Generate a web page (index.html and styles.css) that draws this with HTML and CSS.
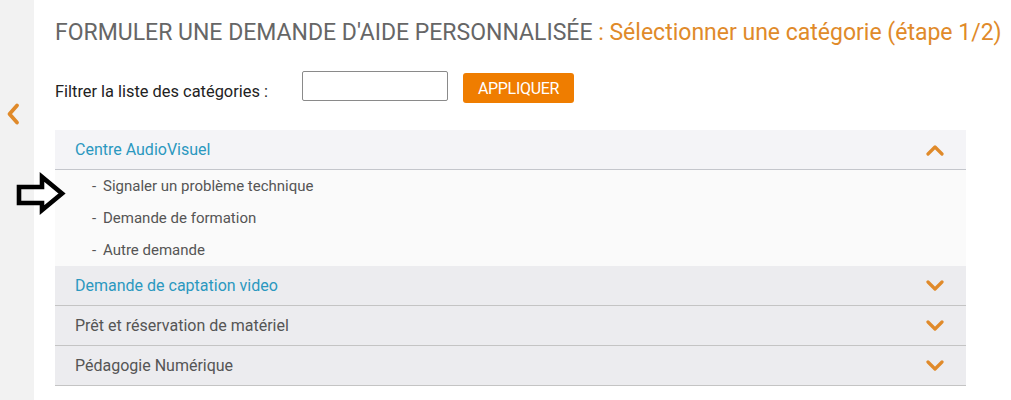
FILE: index.html
```html
<!DOCTYPE html>
<html lang="fr">
<head>
<meta charset="utf-8">
<link rel="stylesheet" href="styles.css">
</head>
<body>
<div class="page">
  <aside class="sidebar">
    <svg class="back" width="16" height="24" viewBox="0 0 16 24"><path d="M12 3.5 L4.5 12 L12 20.5" fill="none" stroke="#e08a2a" stroke-width="3.8" stroke-linecap="round" stroke-linejoin="round"/></svg>
  </aside>
  <main class="main">
    <h1 class="title">FORMULER UNE DEMANDE D'AIDE PERSONNALISÉE <span class="step">: Sélectionner une catégorie (étape 1/2)</span></h1>
    <div class="filter">
      <label class="filter-label">Filtrer la liste des catégories :</label>
      <input class="filter-input" type="text">
      <button class="btn">APPLIQUER</button>
    </div>
    <div class="accordion">
      <div class="acc open">
        <div class="acc-head"><span class="acc-title blue">Centre AudioVisuel</span>
          <svg class="chev" width="20" height="12" viewBox="0 0 20 12"><path d="M3 10 L10 3 L17 10" fill="none" stroke="#e08a2a" stroke-width="3.2" stroke-linecap="round" stroke-linejoin="round"/></svg></div>
        <ul class="acc-body">
          <li><span class="dash">-</span>Signaler un problème technique</li>
          <li><span class="dash">-</span>Demande de formation</li>
          <li><span class="dash">-</span>Autre demande</li>
        </ul>
      </div>
      <div class="acc">
        <div class="acc-head"><span class="acc-title blue">Demande de captation video</span>
          <svg class="chev" width="20" height="12" viewBox="0 0 20 12"><path d="M3 2 L10 9 L17 2" fill="none" stroke="#e08a2a" stroke-width="3.2" stroke-linecap="round" stroke-linejoin="round"/></svg></div>
      </div>
      <div class="acc">
        <div class="acc-head"><span class="acc-title">Prêt et réservation de matériel</span>
          <svg class="chev" width="20" height="12" viewBox="0 0 20 12"><path d="M3 2 L10 9 L17 2" fill="none" stroke="#e08a2a" stroke-width="3.2" stroke-linecap="round" stroke-linejoin="round"/></svg></div>
      </div>
      <div class="acc">
        <div class="acc-head"><span class="acc-title">Pédagogie Numérique</span>
          <svg class="chev" width="20" height="12" viewBox="0 0 20 12"><path d="M3 2 L10 9 L17 2" fill="none" stroke="#e08a2a" stroke-width="3.2" stroke-linecap="round" stroke-linejoin="round"/></svg></div>
      </div>
    </div>
  </main>
  <svg class="pointer" width="54" height="48" viewBox="0 0 54 48"><path d="M4 17 L27 17 L27 7 L47 23.5 L27 40 L27 33 L4 33 Z" fill="none" stroke="#000" stroke-width="4.6" stroke-linejoin="miter"/></svg>
</div>
</body>
</html>
```
FILE: styles.css
```css
* { box-sizing: border-box; }
html, body { margin: 0; padding: 0; background: #fff; }
body { font-family: Roboto, "Noto Sans", sans-serif; color: #555; }
.page { display: flex; min-height: 400px; position: relative; }
.sidebar { width: 34px; background: #f2f2f2; flex: none; padding-top: 102px; padding-left: 5px; }
.back { display: block; }
.main { flex: 1; padding: 18px 0 0 21px; }
.title { margin: 0; font-weight: 400; font-size: 23px; line-height: 30px; color: #666; letter-spacing: 0; white-space: nowrap; }
.step { color: #e08a2a; }
.filter { display: flex; align-items: center; margin-top: 23px; height: 32px; }
.filter-label { font-size: 16.4px; color: #222; width: 247px; padding-top: 8px; white-space: nowrap; }
.filter-input { width: 146px; height: 30px; border: 1px solid #8a8a8a; border-radius: 2px; margin-top: -3px; }
.btn { margin-left: 15px; width: 111px; height: 30px; background: #ef7d00; border: none; border-radius: 3px; color: #fff; font-family: Roboto, sans-serif; font-size: 16px; letter-spacing: -0.3px; padding: 0; margin-top: 2px; }
.accordion { margin-top: 27px; width: 911px; }
.acc-head { height: 40px; display: flex; align-items: center; justify-content: space-between; padding: 0 20px; background: #ececef; border-bottom: 1px solid #c4c4c4; }
.acc.open .acc-head { background: #f4f4f7; border-bottom-color: #c4c6cc; }
.acc-title { font-size: 16px; color: #555; }
.acc-title.blue { color: #2b98bf; }
.chev { margin-right: 1px; }
.acc-body { list-style: none; margin: 0; padding: 0 0 0 37px; background: #fafafa; height: 96px; }
.acc-body li { font-size: 15px; height: 32px; line-height: 32px; color: #555; }
.dash { display: inline-block; width: 11px; }
.pointer { position: absolute; left: 15px; top: 170px; }
```
